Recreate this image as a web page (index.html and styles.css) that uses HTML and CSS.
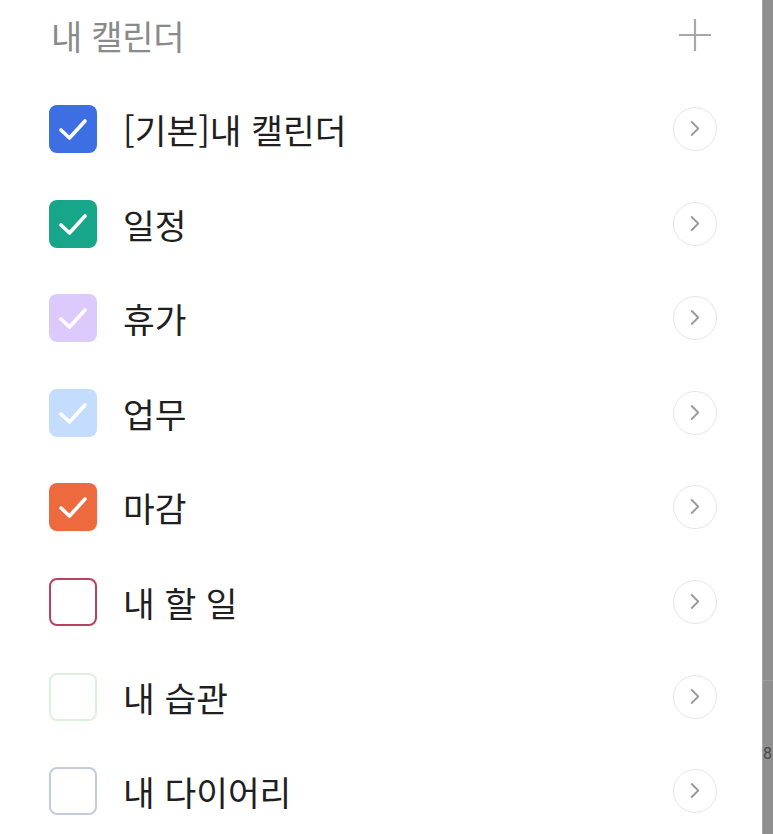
FILE: index.html
```html
<!DOCTYPE html>
<html lang="ko">
<head>
<meta charset="utf-8">
<link rel="stylesheet" href="styles.css">
</head>
<body>
<div class="screen">
  <main class="panel">
    <header class="head">
      <h1 class="title">내 캘린더</h1>
      <svg class="plus" viewBox="0 0 34 34" width="34" height="34"><path d="M17 1V33M1 17H33" stroke="#a8a8a8" stroke-width="2.2" fill="none"/></svg>
    </header>
    <ul class="list">
      <li class="row"><span class="box checked blue"><svg viewBox="0 0 48 48"><path d="M12 25L20.5 33L36 16"/></svg></span><span class="name">[기본]내 캘린더</span><span class="go"><svg viewBox="0 0 44 44"><path d="M19 15L26 22L19 29"/></svg></span></li>
      <li class="row"><span class="box checked green"><svg viewBox="0 0 48 48"><path d="M12 25L20.5 33L36 16"/></svg></span><span class="name">일정</span><span class="go"><svg viewBox="0 0 44 44"><path d="M19 15L26 22L19 29"/></svg></span></li>
      <li class="row"><span class="box checked purple"><svg viewBox="0 0 48 48"><path d="M12 25L20.5 33L36 16"/></svg></span><span class="name">휴가</span><span class="go"><svg viewBox="0 0 44 44"><path d="M19 15L26 22L19 29"/></svg></span></li>
      <li class="row"><span class="box checked sky"><svg viewBox="0 0 48 48"><path d="M12 25L20.5 33L36 16"/></svg></span><span class="name">업무</span><span class="go"><svg viewBox="0 0 44 44"><path d="M19 15L26 22L19 29"/></svg></span></li>
      <li class="row"><span class="box checked orange"><svg viewBox="0 0 48 48"><path d="M12 25L20.5 33L36 16"/></svg></span><span class="name">마감</span><span class="go"><svg viewBox="0 0 44 44"><path d="M19 15L26 22L19 29"/></svg></span></li>
      <li class="row"><span class="box empty rose"></span><span class="name">내 할 일</span><span class="go"><svg viewBox="0 0 44 44"><path d="M19 15L26 22L19 29"/></svg></span></li>
      <li class="row"><span class="box empty mint"></span><span class="name">내 습관</span><span class="go"><svg viewBox="0 0 44 44"><path d="M19 15L26 22L19 29"/></svg></span></li>
      <li class="row"><span class="box empty slate"></span><span class="name">내 다이어리</span><span class="go"><svg viewBox="0 0 44 44"><path d="M19 15L26 22L19 29"/></svg></span></li>
    </ul>
  </main>
  <aside class="strip">
    <div class="strip-top"></div>
    <div class="strip-bottom"><span class="digit">8</span></div>
  </aside>
</div>
</body>
</html>
```

FILE: styles.css
```css
html, body {
  margin: 0;
  padding: 0;
  background: #ffffff;
}
body {
  font-family: "Noto Sans CJK KR", "Noto Sans", sans-serif;
}
.screen {
  display: flex;
  width: 773px;
  height: 834px;
  overflow: hidden;
}
.panel {
  width: 762px;
  flex: none;
  background: #ffffff;
}
.head {
  height: 70px;
  display: flex;
  align-items: center;
  justify-content: space-between;
  padding: 0 50px 0 51px;
}
.title {
  margin: 0;
  font-size: 34px;
  font-weight: 400;
  color: #8a8a8a;
  letter-spacing: -0.3px;
}
.plus {
  display: block;
}
.list {
  list-style: none;
  margin: 0;
  padding: 11.7px 0 0 0;
}
.row {
  height: 94.6px;
  display: flex;
  align-items: center;
  padding: 0 45px 0 49px;
}
.box {
  width: 48px;
  height: 48px;
  box-sizing: border-box;
  border-radius: 8px;
  flex: none;
  display: flex;
}
.box svg {
  width: 48px;
  height: 48px;
}
.box svg path {
  fill: none;
  stroke: #ffffff;
  stroke-width: 3.6;
  stroke-linecap: round;
  stroke-linejoin: round;
}
.blue { background: #3d6fe3; }
.green { background: #17a689; }
.purple { background: #dccafc; }
.sky { background: #c4dcfd; }
.orange { background: #ec6a3d; }
.empty { border: 2px solid; background: #fff; }
.rose { border-color: #b6435f; }
.mint { border-color: #ddf2dd; }
.slate { border-color: #c5cbde; }
.name {
  margin-left: 26px;
  flex: 1;
  font-size: 34.5px;
  color: #1f1f1f;
  letter-spacing: 0;
}
.go {
  width: 44px;
  height: 44px;
  flex: none;
  box-sizing: border-box;
  border: 1.5px solid #e6e6e6;
  border-radius: 50%;
  display: flex;
}
.go svg {
  width: 41px;
  height: 41px;
}
.go svg path {
  fill: none;
  stroke: #9a9a9a;
  stroke-width: 2;
  stroke-linecap: round;
  stroke-linejoin: round;
}
.strip {
  width: 11px;
  flex: none;
  display: flex;
  flex-direction: column;
  background: #8f8f8f;
  border-left: 1px solid #a4a4a4;
  box-sizing: border-box;
}
.strip-top {
  height: 680px;
  border-bottom: 1px solid #9c9c9c;
}
.strip-bottom {
  flex: 1;
  position: relative;
  overflow: hidden;
}
.digit {
  position: absolute;
  left: 0;
  top: 64px;
  font-family: "Roboto", sans-serif;
  font-size: 16px;
  line-height: 18px;
  color: #4a4a4a;
}
```
